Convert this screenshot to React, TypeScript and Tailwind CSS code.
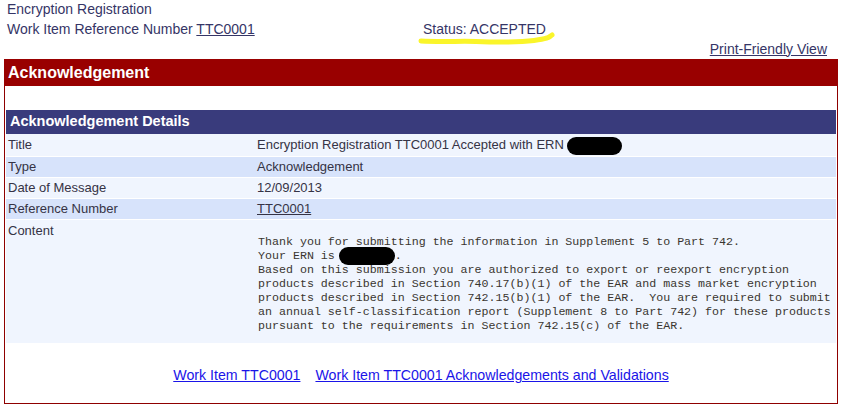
const contentText = [
  "Thank you for submitting the information in Supplement 5 to Part 742.",
  null,
  "Based on this submission you are authorized to export or reexport encryption",
  "products described in Section 740.17(b)(1) of the EAR and mass market encryption",
  "products described in Section 742.15(b)(1) of the EAR.  You are required to submit",
  "an annual self-classification report (Supplement 8 to Part 742) for these products",
  "pursuant to the requirements in Section 742.15(c) of the EAR.",
]

function Blob({ w, h, top }: { w: string; h: string; top: string }) {
  return (
    <span className={`relative inline-block ${w} h-[14px] align-middle`}>
      <span className={`absolute left-0 ${top} ${h} w-full rounded-full bg-black`} />
    </span>
  )
}

function Row({ label, dark, children }: { label: string; dark?: boolean; children: React.ReactNode }) {
  return (
    <div className={`flex h-[21px] items-center ${dark ? "bg-[#d7e3fb]" : "bg-[#f0f5fe]"} border-t border-white`}>
      <div className="w-[251px] pl-[2px]">{label}</div>
      <div>{children}</div>
    </div>
  )
}

export default function App() {
  return (
    <div className="relative w-[843px] h-[411px] bg-white text-[14px] text-[#353566] font-['Liberation_Sans',Arial,sans-serif]">
      {/* page header */}
      <div className="pl-[7px] leading-[20px] -mt-[1px]">
        <div>Encryption Registration</div>
        <div className="flex">
          <div className="w-[416px]">
            Work Item Reference Number <a className="underline" href="#">TTC0001</a>
          </div>
          <div>Status: ACCEPTED</div>
        </div>
      </div>

      <svg className="absolute left-[418px] top-[31px]" width="140" height="16" viewBox="0 0 140 16">
        <path
          d="M3 11 C20 12 45 11 58 11.5 S100 12.5 116 10.5 S131 7 134 5"
          fill="none"
          stroke="#faf52a"
          strokeWidth="5"
          strokeLinecap="round"
        />
      </svg>

      <div className="flex justify-end pr-[16px] h-[20px] items-center">
        <a className="underline" href="#">Print-Friendly View</a>
      </div>

      {/* main panel */}
      <div className="ml-[4px] w-[834px]">
        <div className="h-[27px] bg-[#990000] flex items-center pl-[4px] text-white font-bold text-[16px]">
          Acknowledgement
        </div>
        <div className="border-x border-b border-[#8f0000] pt-[24px]">
          <div className="mx-[1px] text-[13px] text-[#353345]">
            <div className="h-[24px] bg-[#393b7c] flex items-center pl-[4px] text-white font-bold text-[14.5px]">
              Acknowledgement Details
            </div>
            <div className="flex h-[22px] items-center bg-[#f0f5fe]">
              <div className="w-[251px] pl-[2px]">Title</div>
              <div>
                Encryption Registration TTC0001 Accepted with ERN{" "}
                <Blob w="w-[55px]" h="h-[18px]" top="-top-[2px]" />
              </div>
            </div>
            <Row label="Type" dark>Acknowledgement</Row>
            <Row label="Date of Message">12/09/2013</Row>
            <Row label="Reference Number" dark>
              <a className="underline" href="#">TTC0001</a>
            </Row>
            <div className="flex bg-[#f0f5fe] border-t border-white h-[124px]">
              <div className="w-[252px] pl-[2px] pt-[3px] leading-[16px]">Content</div>
              <pre className="pt-[15px] font-['Liberation_Mono','Courier_New',monospace] text-[11.65px] leading-[14px] text-[#3a3530]">
                {contentText.map((line, i) =>
                  line === null ? (
                    <div key={i}>
                      Your ERN is<span className="-ml-[3px]" /> <Blob w="w-[8ch]" h="h-[18px]" top="-top-[2px]" />.
                    </div>
                  ) : (
                    <div key={i}>{line}</div>
                  )
                )}
              </pre>
            </div>
          </div>

          <div className="flex justify-center gap-[15px] pt-[22px] pb-[18px] leading-[20px] text-[14.2px]">
            <a className="underline text-[#1a14e8]" href="#">Work Item TTC0001</a>
            <a className="underline text-[#1a14e8]" href="#">Work Item TTC0001 Acknowledgements and Validations</a>
          </div>
        </div>
      </div>
    </div>
  )
}
